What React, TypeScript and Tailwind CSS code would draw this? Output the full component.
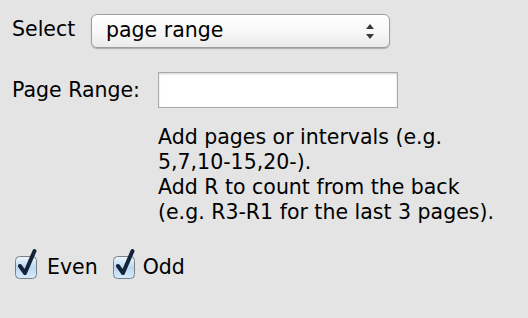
import React from "react";

function Check({ id }: { id: string }) {
  return (
    <svg width="26" height="34" viewBox="0 0 26 34" className="block">
      <defs>
        <linearGradient id={`g${id}`} x1="0" y1="0" x2="0" y2="1">
          <stop offset="0" stopColor="#eef6fd" />
          <stop offset="0.5" stopColor="#bcd8f2" />
          <stop offset="1" stopColor="#d6ebfb" />
        </linearGradient>
      </defs>
      <rect x="1.5" y="10.5" width="21" height="22" rx="4" fill={`url(#g${id})`} stroke="#7a7f88" strokeWidth="1" />
      <path d="M6 20 L11 27 L20.5 5" fill="none" stroke="#13243a" strokeWidth="4" strokeLinecap="round" strokeLinejoin="round" />
    </svg>
  );
}

export default function App() {
  return (
    <div
      className="w-[528px] h-[318px] bg-[#e4e4e4] text-black text-[20.5px] leading-[25px] overflow-hidden"
      style={{ fontFamily: '"DejaVu Sans", "Liberation Sans", sans-serif' }}
    >
      <div className="flex items-center pt-[14px] pl-[12px]">
        <span className="w-[79px] -mt-[4px]">Select</span>
        <div className="relative w-[299px] h-[34px] rounded-[6px] border border-[#9d9d9d] bg-gradient-to-b from-[#ffffff] via-[#f8f8f8] to-[#ebebeb] shadow-[0_1px_1px_rgba(0,0,0,0.25)] flex items-center pl-[14px]">
          <span className="-mt-[1px]">page range</span>
          <svg className="absolute right-[15px] top-[9px]" width="8" height="15" viewBox="0 0 8 15">
            <path d="M4 0 L8 5 L0 5 Z" fill="#3a3a3a" />
            <path d="M0 10 L8 10 L4 15 Z" fill="#3a3a3a" />
          </svg>
        </div>
      </div>
      <div className="flex items-center pt-[24px] pl-[12px]">
        <span className="w-[146px]">Page Range:</span>
        <div className="w-[240px] h-[36px] bg-white border border-[#a9a9a9] shadow-[inset_0_1px_2px_rgba(0,0,0,0.18)]" />
      </div>
      <div className="pl-[158px] pt-[17px]">
        <div>Add pages or intervals (e.g.</div>
        <div>5,7,10-15,20-).</div>
        <div>Add R to count from the back</div>
        <div>(e.g. R3-R1 for the last 3 pages).</div>
      </div>
      <div className="flex items-center pl-[14px] pt-[20px]">
        <Check id="a" />
        <span className="ml-[7px] mt-[10px]">Even</span>
        <div className="ml-[14px]">
          <Check id="b" />
        </div>
        <span className="ml-[5px] mt-[10px]">Odd</span>
      </div>
    </div>
  );
}
